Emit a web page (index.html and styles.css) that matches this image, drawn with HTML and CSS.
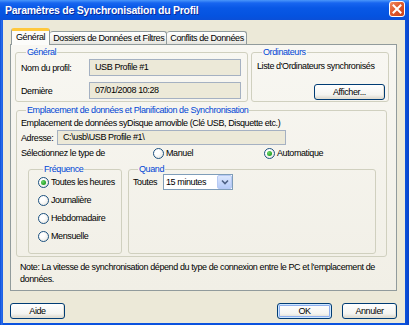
FILE: index.html
```html
<!DOCTYPE html>
<html lang="fr">
<head>
    <meta charset="UTF-8">
    <title>Paramètres de Synchronisation du Profil</title>
    <link rel="stylesheet" href="styles.css">
</head>
<body>
    <div class="window">
        <div class="titlebar">
            <span class="title">Paramètres de Synchronisation du Profil</span>
            <span class="close">
                <svg width="14" height="14" viewBox="0 0 14 14"><path d="M3.5 3.5 L10.5 10.5 M10.5 3.5 L3.5 10.5" stroke="#fff" stroke-width="2" stroke-linecap="square"/></svg>
            </span>
        </div>

        <div class="client">
            <div class="tabs">
                <div class="tab active">Général</div>
                <div class="tab">Dossiers de Données et Filtres</div>
                <div class="tab">Conflits de Données</div>
            </div>

            <div class="panel">
                <div class="top-row">
                    <fieldset class="group general">
                        <legend>Général</legend>
                        <div class="field">
                            <span class="lbl">Nom du profil:</span>
                            <div class="box">USB Profile #1</div>
                        </div>
                        <div class="field">
                            <span class="lbl">Dernière</span>
                            <div class="box">07/01/2008 10:28</div>
                        </div>
                    </fieldset>
                    <fieldset class="group computers">
                        <legend>Ordinateurs</legend>
                        <p class="line">Liste d'Ordinateurs synchronisés</p>
                        <button class="btn afficher">Afficher...</button>
                    </fieldset>
                </div>

                <fieldset class="group location">
                    <legend>Emplacement de données et Planification de Synchronisation</legend>
                    <p class="line">Emplacement de données syDisque amovible (Clé USB, Disquette etc.)</p>
                    <div class="address">
                        <span class="addr-lbl">Adresse:</span>
                        <div class="box small">C:\usb\USB Profile #1\</div>
                    </div>
                    <div class="type-row">
                        <span>Sélectionnez le type de</span>
                        <span class="opt"><span class="radio"></span>Manuel</span>
                        <span class="opt"><span class="radio checked"></span>Automatique</span>
                    </div>
                    <div class="sub-row">
                        <fieldset class="group freq">
                            <legend>Fréquence</legend>
                            <span class="opt"><span class="radio checked"></span>Toutes les heures</span>
                            <span class="opt"><span class="radio"></span>Journalière</span>
                            <span class="opt"><span class="radio"></span>Hebdomadaire</span>
                            <span class="opt"><span class="radio"></span>Mensuelle</span>
                        </fieldset>
                        <fieldset class="group when">
                            <legend>Quand</legend>
                            <div class="when-row">
                                <span class="when-lbl">Toutes</span>
                                <div class="select">
                                    <span>15 minutes</span>
                                    <span class="drop">
                                        <svg width="8" height="6" viewBox="0 0 8 6"><path d="M1 1.5 L4 4.5 L7 1.5" fill="none" stroke="#4D6185" stroke-width="1.6"/></svg>
                                    </span>
                                </div>
                            </div>
                        </fieldset>
                    </div>
                </fieldset>

                <p class="note">Note: La vitesse de synchronisation dépend du type de connexion entre le PC et l'emplacement de données.</p>
            </div>

            <div class="buttons">
                <button class="btn">Aide</button>
                <span class="spacer"></span>
                <button class="btn default">OK</button>
                <button class="btn">Annuler</button>
            </div>
        </div>
    </div>
</body>
</html>
```

FILE: styles.css
```css
* { box-sizing: border-box; }
html, body { margin: 0; padding: 0; }
body { font-family: "Liberation Sans", Arial, sans-serif; font-size: 9px; letter-spacing: -0.4px; color: #000; width: 409px; height: 325px; overflow: hidden; background: #0B4FDB; }

.window { width: 409px; height: 325px; display: flex; flex-direction: column; background: linear-gradient(to right, #0A4CD6, #2F72EE 2px, #0B52DE 3px, #0B52DE 405px, #0A44C8); }
.titlebar { height: 20px; flex: none; display: flex; justify-content: space-between; align-items: flex-start; padding: 0 4px 0 5px; background: linear-gradient(to bottom, #4A97FA 0, #1765F0 3px, #0858E6 8px, #0553E0 16px, #0A4FD8 20px); color: #fff; }
.title { font-weight: bold; font-size: 10.5px; letter-spacing: -0.25px; line-height: 21px; text-shadow: 1px 1px 0 #0C2A9A; }
.close { width: 16px; height: 16px; margin-top: 1px; border: 1px solid #fff; border-radius: 3px; background: linear-gradient(135deg, #F08A62 0%, #E05A2E 45%, #C7401A 100%); display: flex; align-items: center; justify-content: center; }

.client { flex: 1; margin: 0 4px 2px 3px; background: #ECE9D8; padding: 8px 8px 4px 7px; display: flex; flex-direction: column; }

.tabs { height: 16px; display: flex; align-items: flex-end; padding-left: 1px; }
.tab { height: 13px; line-height: 13px; padding: 0 2px 0 3px; border: 1px solid #919B9C; border-bottom: none; border-left: none; border-radius: 3px 3px 0 0; background: linear-gradient(#FFFFFF, #F3F3EF 60%, #E5E4DE); white-space: nowrap; }
.tab.active { height: 17px; margin-bottom: -1px; padding: 0 4px; line-height: 13px; border-left: 1px solid #919B9C; border-top: 3px solid #FFC83C; background: #FCFCFA; position: relative; z-index: 1; }

.panel { height: 247px; flex: none; border: 1px solid #919B9C; background: linear-gradient(#F8F7F2, #F1EFE6); padding: 1px 7px 0 4px; }

.group { margin: 0; padding: 0; border: 1px solid #D0D0BF; border-radius: 3px; min-width: 0; }
.group legend { color: #0046D5; padding: 0 1px; margin-left: 5px; line-height: 13px; }

.top-row { display: grid; grid-template-columns: 233px 1fr; gap: 3px; }
.general { height: 56px; padding: 0 6px 0 5px; }
.field { display: flex; align-items: center; height: 17px; margin-bottom: 6px; }
.lbl { width: 68px; flex: none; }
.box { flex: 1; height: 17px; line-height: 15px; padding-left: 5px; border: 1px solid #A5B1C2; background: #ECE9D8; white-space: nowrap; }

.computers { height: 56px; padding: 1px 3px 0 5px; }
.line { margin: 0; line-height: 12px; white-space: nowrap; }
.afficher { display: block; margin: 12px 0 0 auto; width: 71px; }

.btn { height: 16px; padding: 0; font: inherit; letter-spacing: inherit; color: #000; border: 1px solid #003C74; border-radius: 3px; background: linear-gradient(#FFFFFF, #F4F4F0 70%, #D9D5CA); box-shadow: inset -1px -1px 0 #E3DFD3; }
.btn.default { box-shadow: inset 0 0 0 1px #CEE7FF, inset 0 0 0 2px #8EAFEE; }

.location { height: 153px; margin: 2px 2px 0 1px; padding: 0 4px 2px 4px; }
.address { display: flex; align-items: center; margin-top: 1px; height: 15px; }
.addr-lbl { width: 36px; flex: none; }
.box.small { flex: none; width: 229px; height: 15px; line-height: 13px; }
.type-row { display: grid; grid-template-columns: 132px 111px auto; height: 12px; line-height: 12px; margin-top: 2px; }

.opt { display: flex; align-items: center; height: 12px; line-height: 12px; white-space: nowrap; }
.radio { width: 11px; height: 11px; flex: none; margin-right: 2px; border: 1px solid #1C5180; border-radius: 50%; background: radial-gradient(circle at 35% 35%, #FFFFFF 30%, #E2E1D9 100%); display: flex; align-items: center; justify-content: center; }
.radio.checked::after { content: ""; width: 5px; height: 5px; border-radius: 50%; background: radial-gradient(circle at 35% 35%, #6FD66F, #21A121 70%); }

.sub-row { display: grid; grid-template-columns: 94px 248px; gap: 6px; margin: 4px 0 0 7px; }
.freq { height: 91px; padding: 0 0 0 9px; }
.freq .opt { margin-bottom: 6px; }
.when { height: 91px; padding: 0 0 0 4px; }
.when-row { display: flex; align-items: center; margin-top: -2px; height: 16px; }
.when-lbl { width: 30px; flex: none; }
.select { width: 70px; height: 16px; display: flex; align-items: center; justify-content: space-between; border: 1px solid #7F9DB9; background: #fff; padding-left: 2px; }
.drop { width: 15px; height: 14px; display: flex; align-items: center; justify-content: center; border: 1px solid #B7CAF4; border-radius: 2px; background: linear-gradient(#DCE7FD, #B6CBF8); }

.note { margin: 4px 0 0 5px; width: 365px; line-height: 12px; }

.buttons { display: flex; margin-top: 12px; }
.buttons .btn { width: 55px; }
.buttons .btn.default { margin-right: 10px; }
.spacer { flex: 1; }
```
